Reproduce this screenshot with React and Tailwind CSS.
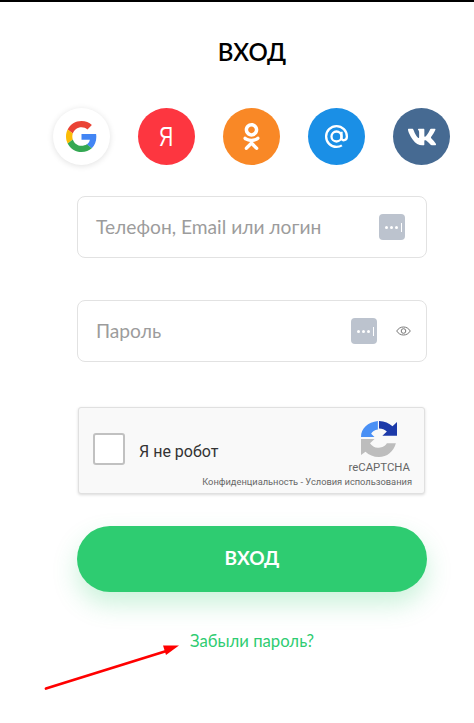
import React from 'react'
import { FaOdnoklassniki, FaVk } from 'react-icons/fa'

const font = "font-['Lato','Noto_Sans',sans-serif]"

function GoogleIcon() {
  return (
    <svg width="31" height="31" viewBox="0 0 48 48">
      <path fill="#EA4335" d="M24 9.5c3.54 0 6.71 1.22 9.21 3.6l6.85-6.85C35.9 2.38 30.47 0 24 0 14.62 0 6.51 5.38 2.56 13.22l7.98 6.19C12.43 13.72 17.74 9.5 24 9.5z" />
      <path fill="#4285F4" d="M46.98 24.55c0-1.57-.15-3.09-.38-4.55H24v9.02h12.94c-.58 2.96-2.26 5.48-4.78 7.18l7.73 6c4.51-4.18 7.09-10.36 7.09-17.65z" />
      <path fill="#FBBC05" d="M10.53 28.59c-.48-1.45-.76-2.99-.76-4.59s.27-3.14.76-4.59l-7.98-6.19C.92 16.46 0 20.12 0 24c0 3.88.92 7.54 2.56 10.78l7.97-6.19z" />
      <path fill="#34A853" d="M24 48c6.48 0 11.93-2.13 15.89-5.81l-7.73-6c-2.15 1.45-4.92 2.3-8.16 2.3-6.26 0-11.57-4.22-13.47-9.91l-7.98 6.19C6.51 42.62 14.62 48 24 48z" />
    </svg>
  )
}

function MailIcon() {
  return (
    <svg width="25" height="25" viewBox="0 0 26 26" fill="none" stroke="#fff" strokeWidth="2.4">
      <circle cx="13" cy="13" r="5.2" />
      <path d="M18.2 8v6.5c0 3.4 5.6 3.4 5.6-1.5C23.8 7 19 2.2 13 2.2S2.2 7 2.2 13 7 23.8 13 23.8c2.2 0 4-.5 5.6-1.6" />
    </svg>
  )
}

function RecaptchaIcon() {
  return (
    <svg width="36" height="36" viewBox="2 1 32 34" preserveAspectRatio="none">
      <path fill="#4a90f5" d="M2 16C2 8 8 2 17 1v8c-3 .4-5 2-6 4l3 3H2z" />
      <path fill="#1c3aa9" d="M18 1c5 0 9 2 12 5l4-4v13H21l4-4c-2-2-4-3-7-3V1z" />
      <path fill="#bdbdbd" d="M2 18h12l-4 4c2 3 5 5 9 4 3-.4 5-2 6-4h8c-2 8-8 13-15 13-5 0-9-2-12-5l-4 3V18z" />
    </svg>
  )
}

function DotsIcon() {
  return (
    <div className="flex h-[26px] w-[26px] shrink-0 items-center justify-end gap-[2px] rounded-[4px] bg-[#bcc3ce] pr-[3px]">
      <span className="h-[3px] w-[3px] rounded-full bg-white" />
      <span className="h-[3px] w-[3px] rounded-full bg-white" />
      <span className="h-[3px] w-[3px] rounded-full bg-white" />
      <span className="ml-[1px] h-[9px] w-[1px] bg-white" />
    </div>
  )
}

function EyeIcon() {
  return (
    <svg width="15" height="10" viewBox="0 0 15 10" fill="none" stroke="#777" strokeWidth="1">
      <path d="M.7 5C2.5 2.2 4.8 1 7.5 1s5 1.2 6.8 4c-1.8 2.8-4.1 4-6.8 4S2.5 7.8.7 5z" />
      <circle cx="7.5" cy="5" r="2.3" />
    </svg>
  )
}

function Social({ bg, children }) {
  return (
    <div className={`flex h-[57px] w-[57px] items-center justify-center rounded-full ${bg}`}>
      {children}
    </div>
  )
}

export default function App() {
  return (
    <div className={`relative h-[723px] w-[474px] overflow-hidden border-t-2 border-black bg-white ${font}`}>
      <h1 className="mt-[35px] ml-[77px] w-[350px] text-center text-[24px] leading-[30px] font-semibold text-black">ВХОД</h1>

      <div className="mt-[41px] ml-[53px] flex w-[397px] justify-between">
        <Social bg="bg-white shadow-[0_1px_6px_rgba(0,0,0,0.12)]"><GoogleIcon /></Social>
        <Social bg="bg-[#fd3640]">
          <span className="scale-x-[0.7] text-[28px] text-white font-['Liberation_Sans',sans-serif]">Я</span>
        </Social>
        <Social bg="bg-[#f98826]"><FaOdnoklassniki className="text-[27px] text-white" /></Social>
        <Social bg="bg-[#1a8fe6]"><MailIcon /></Social>
        <Social bg="bg-[#466a92]"><FaVk className="text-[30px] text-white" /></Social>
      </div>

      <div className="mt-[31px] ml-[77px] flex w-[350px] flex-col">
        <div className="flex h-[62px] items-center justify-between rounded-[8px] border border-[#e2e2e2] pr-[21px] pl-[18px]">
          <span className="text-[19.2px] text-[#9c9c9c]">Телефон, Email или логин</span>
          <DotsIcon />
        </div>

        <div className="mt-[42px] flex h-[62px] items-center rounded-[8px] border border-[#e2e2e2] pr-[15px] pl-[18px]">
          <span className="flex-1 text-[19.2px] text-[#9c9c9c]">Пароль</span>
          <DotsIcon />
          <div className="ml-[19px] flex"><EyeIcon /></div>
        </div>

        <div className="mt-[45px] ml-[1px] flex h-[87px] w-[347px] rounded-[3px] border border-[#e0e0e0] bg-[#f9f9f9] shadow-[0_1px_3px_rgba(0,0,0,0.15)] font-['Roboto',sans-serif]">
          <div className="mt-[25px] ml-[14px] h-[32px] w-[32px] rounded-[3px] border-2 border-[#c1c1c1] bg-white" />
          <span className="mt-[34px] ml-[14px] text-[16px] leading-[20px] text-[#333]">Я не робот</span>
          <div className="mr-[12px] ml-auto flex flex-col items-end">
            <div className="mt-[13px] mr-[15px] flex"><RecaptchaIcon /></div>
            <span className="mt-[4px] mr-[2px] text-[11.4px] leading-[13px] text-[#666]">reCAPTCHA</span>
            <span className="mt-[2px] -ml-[100px] text-[9.3px] leading-[12px] whitespace-nowrap text-[#666]">Конфиденциальность - Условия использования</span>
          </div>
        </div>

        <button className="mt-[32px] h-[66px] w-[350px] rounded-full bg-[#2ecc71] pb-[2px] text-[19px] font-bold text-white shadow-[0_12px_24px_rgba(46,204,113,0.25)]">
          ВХОД
        </button>

        <a className="mt-[39px] text-center text-[16.7px] leading-[20px] text-[#2ecc71]">Забыли пароль?</a>
      </div>

      {/* red annotation arrow */}
      <svg className="absolute top-[612px] left-[40px]" width="150" height="90" viewBox="0 0 150 90">
        <path d="M6 74.5L128 36.5" stroke="#ff0000" strokeWidth="2.8" strokeLinecap="round" />
        <path d="M139 31.5L123 31.5L126 41z" fill="#ff0000" />
      </svg>
    </div>
  )
}
